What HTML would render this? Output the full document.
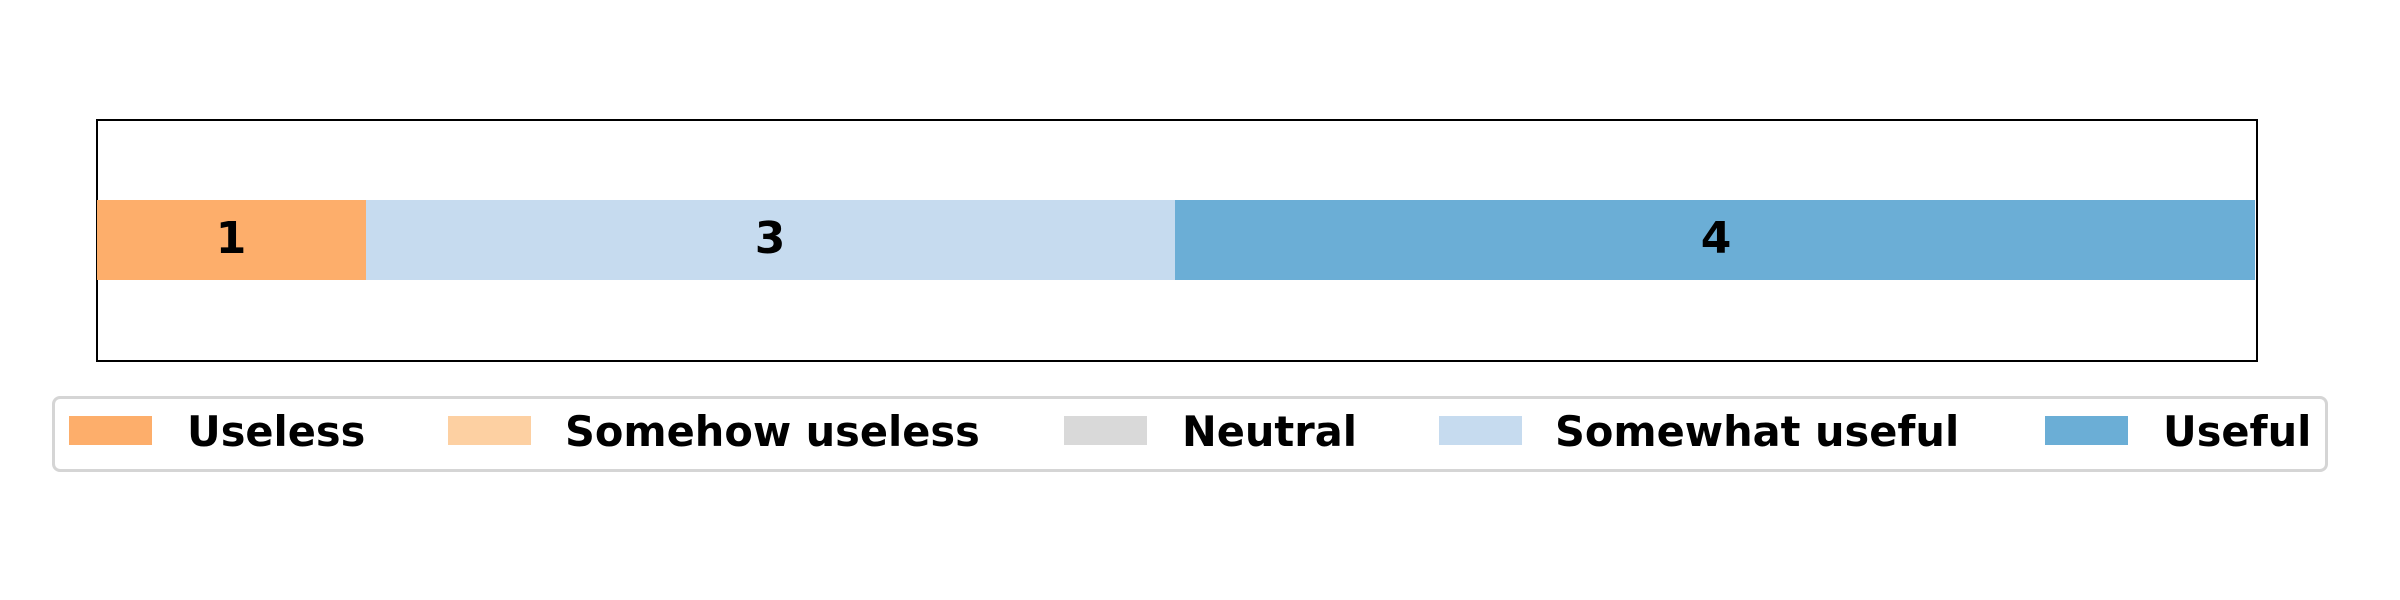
<!DOCTYPE html>
<html><head><meta charset="utf-8"><style>
html,body{margin:0;padding:0;background:#fff;}
body{width:2400px;height:600px;position:relative;overflow:hidden;font-family:"DejaVu Sans","Liberation Sans",sans-serif;font-weight:bold;}
.a{position:absolute;}
.lbl{position:absolute;font-size:44px;line-height:80px;top:199px;height:80px;transform:translateX(-50%);color:#000;}
.lt{position:absolute;font-size:41.5px;line-height:44px;top:410px;color:#000;}
.p{position:absolute;top:416px;height:29px;width:83px;}
</style></head><body>
<div class="a" style="left:96px;top:119px;width:2158px;height:239px;border:2px solid #000;"></div>
<div class="a" style="left:97px;top:200px;width:269px;height:80px;background:#fdae6b"></div>
<div class="a" style="left:366px;top:200px;width:809px;height:80px;background:#c6dbef"></div>
<div class="a" style="left:1175px;top:200px;width:1080px;height:80px;background:#6baed6"></div>
<div class="lbl" style="left:231px">1</div>
<div class="lbl" style="left:770px">3</div>
<div class="lbl" style="left:1716px">4</div>
<div class="a" style="left:52px;top:396px;width:2270px;height:70px;border:3px solid #d5d5d5;border-radius:8px;"></div>
<div class="p" style="left:69px;background:#fdae6b"></div><div class="lt" style="left:187px">Useless</div>
<div class="p" style="left:448px;background:#fdd0a2"></div><div class="lt" style="left:565px">Somehow useless</div>
<div class="p" style="left:1064px;background:#d9d9d9"></div><div class="lt" style="left:1182px">Neutral</div>
<div class="p" style="left:1439px;background:#c6dbef"></div><div class="lt" style="left:1555px">Somewhat useful</div>
<div class="p" style="left:2045px;background:#6baed6"></div><div class="lt" style="left:2163px">Useful</div>
</body></html>
